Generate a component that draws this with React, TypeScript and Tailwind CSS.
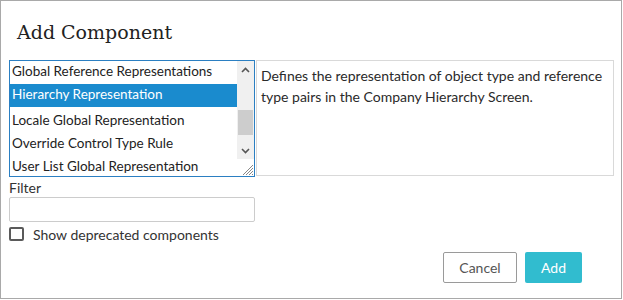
import React from 'react'

const ITEMS_BEFORE = ['Global Reference Representations']
const SELECTED = 'Hierarchy Representation'
const ITEMS_AFTER = ['Locale Global Representation', 'Override Control Type Rule', 'User List Global Representation']

const ui = { fontFamily: 'Lato, "Liberation Sans", sans-serif' }

function ScrollBar() {
  return (
    <div className="absolute right-0 top-0 bottom-0 w-[17px] flex flex-col bg-[#f0f0f0]">
      <div className="h-[17px] flex items-center justify-center">
        <svg width="9" height="6" viewBox="0 0 9 6">
          <path d="M1 5 L4.5 1.5 L8 5" fill="none" stroke="#555" strokeWidth="1.6" />
        </svg>
      </div>
      <div className="h-[32px]" />
      <div className="h-[25px] mx-px bg-[#cdcdcd]" />
      <div className="flex-1" />
      <div className="h-[17px] flex items-center justify-center">
        <svg width="9" height="6" viewBox="0 0 9 6">
          <path d="M1 1 L4.5 4.5 L8 1" fill="none" stroke="#555" strokeWidth="1.6" />
        </svg>
      </div>
      <div className="h-[17px] bg-white flex items-end justify-end">
        <svg width="14" height="14" viewBox="0 0 14 14">
          <path d="M13 3 L3 13 M13 6 L6 13 M13 9 L9 13 M13 12 L12 13" stroke="#888" strokeWidth="1" />
        </svg>
      </div>
    </div>
  )
}

export default function App() {
  return (
    <div className="w-[623px] h-[300px] bg-white">
      <div className="w-[622px] h-[299px] border border-[#a9a9a9] flex flex-col" style={ui}>
        <div className="h-[59px] pl-[16px] pt-[19px]">
          <h1 className="text-[19px] leading-[24px] text-[#222]" style={{ fontFamily: '"DejaVu Serif", "Liberation Serif", serif' }}>
            Add Component
          </h1>
        </div>

        <div className="pl-[8px] pr-[7px]">
          <div className="flex">
            <div className="relative w-[246px] h-[117px] border border-[#2b7fc2] overflow-hidden text-[13.5px] text-[#222]">
              <div className="pr-[17px]">
                {ITEMS_BEFORE.map((t) => (
                  <div key={t} className="h-[23px] leading-[21px] px-[2px] truncate">{t}</div>
                ))}
                <div className="h-[23px] leading-[21px] px-[2px] bg-[#1a8bce] text-white truncate">{SELECTED}</div>
                <div className="h-[3px]" />
                {ITEMS_AFTER.map((t) => (
                  <div key={t} className="h-[23px] leading-[21px] px-[2px] truncate">{t}</div>
                ))}
              </div>
              <ScrollBar />
            </div>
            <div className="ml-[1px] flex-1 h-[116px] border border-[#d9d9d9] px-[4px] pt-[4px] text-[14px] leading-[21px] text-[#2a2a2a]">
              Defines the representation of object type and reference type pairs in the Company Hierarchy Screen.
            </div>
          </div>

          <div className="mt-[3px] text-[14px] leading-[16px] text-[#333]">Filter</div>
          <input className="mt-[1px] block w-[246px] h-[25px] border border-[#cccccc] rounded-[2px] outline-none px-2 text-[14px]" />
          <label className="mt-[5px] flex items-center h-[14px]">
            <span className="w-[15px] h-[14px] border-2 border-[#5a5a5a] rounded-[2px] bg-white" />
            <span className="ml-[9px] text-[14px] text-[#333]">Show deprecated components</span>
          </label>
        </div>

        <div className="mt-[11px] flex justify-end gap-[8px] pr-[39px]">
          <button className="w-[74px] h-[31px] border border-[#9a9a9a] rounded-[2px] bg-white text-[14px] text-[#555]">Cancel</button>
          <button className="w-[57px] h-[31px] rounded-[2px] bg-[#31bccf] text-[14px] text-white">Add</button>
        </div>
      </div>
    </div>
  )
}
